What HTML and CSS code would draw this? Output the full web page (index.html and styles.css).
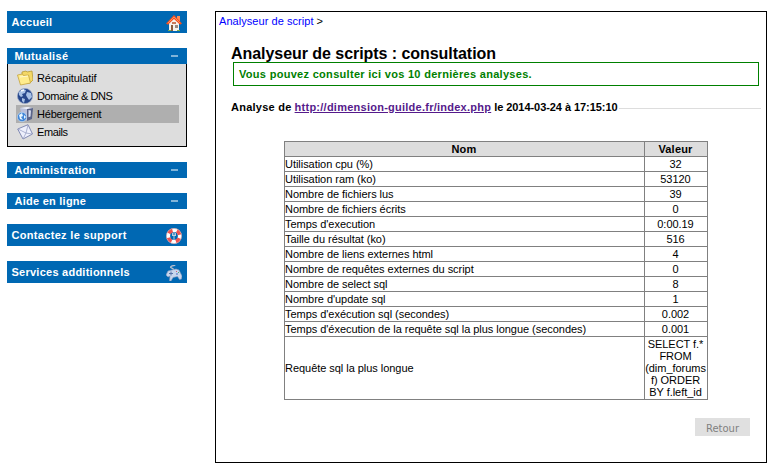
FILE: index.html
```html
<!DOCTYPE html>
<html lang="fr">
<head>
<meta charset="utf-8">
<title>Analyseur de scripts</title>
<link rel="stylesheet" href="styles.css">
</head>
<body>
<nav class="sidebar">
  <div class="bar tall"><span class="t-acc">Accueil</span>
    <svg class="icon" viewBox="0 0 16 16"><path d="M11 1h3v5h-3z" fill="#ff8a55"/><path d="M3 7l5-5 5 5v9H3z" fill="#f5f1ed"/><path d="M0 8.500 8 0l8 8.500-2 1.200L8 4 2 9.700z" fill="#f4511e"/><path d="M2 8l6-6 6 6" fill="none" stroke="#ff9a70" stroke-width=".8"/><path d="M5 10h2v6H5z" fill="#8c5a3c"/><path d="M9 10h3v3H9z" fill="#9a8a80"/><path d="M6 7h4v2H6z" fill="#c9785a"/><path d="M2 15h3v1H2zM11 15h3v1h-3z" fill="#7fae4a"/></svg>
  </div>
  <section class="group">
    <div class="bar"><span class="t-mut">Mutualisé</span><i class="dash"></i></div>
    <ul class="items">
      <li><svg class="icon" viewBox="0 0 16 16"><path d="M5 2l4-1 1 1 5-1 1 9-3 3H5z" fill="#f4d867" stroke="#b89a35" stroke-width=".8"/><path d="M.5 5l5-1 1 1.500 5-.5 2 8-10 2z" fill="#ffec8c" stroke="#c5a33c" stroke-width=".8"/><path d="M3 7l8-1" stroke="#fff9cf"/></svg><span class="t-rec">Récapitulatif</span></li>
      <li><svg class="icon" viewBox="0 0 16 16"><circle cx="8" cy="8" r="7.600" fill="#27478c" stroke="#9aa8c4" stroke-width=".7"/><path d="M2 4l4-3 3 1-1 3-3 1 1 2-2 1-2-2zM10 4l4 1 1 4-3 3-2-3-1-2zM5 10l3 1-1 4-2-2z" fill="#a8c1e6"/><path d="M4 3l3-1" stroke="#f4f8ff" stroke-width="1.400"/></svg><span class="t-dom">Domaine &amp; DNS</span></li>
      <li class="active"><svg class="icon" viewBox="0 0 16 16"><path d="M3 2l8-1v13l-5 1z" fill="#b9bfdb"/><path d="M10 1l6 1-1 11-5 2z" fill="#596389"/><path d="M11.500 4l2.500.5-.5 6-2 .8z" fill="#d7ddef"/><path d="M3 2l8-1 5 1-6 1z" fill="#f2f4fc"/><circle cx="5" cy="11" r="4.700" fill="#4286d8" stroke="#d7e9fa" stroke-width=".6"/><path d="M2 9l3-2 1 3-2 1 2 3-3-1zM7 9l2 2-2 2z" fill="#e8f6ff"/></svg><span class="t-heb">Hébergement</span></li>
      <li><svg class="icon" viewBox="0 0 16 16"><path d="M.7 5L11 .7 15.500 10 6 15z" fill="#eef0fc" stroke="#7780ad" stroke-width=".9"/><path d="M1 5l8 4 2-8M9 9l6 1M9 9l-3 6" fill="none" stroke="#9ba2c5" stroke-width=".8"/></svg><span class="t-ema">Emails</span></li>
    </ul>
  </section>
  <div class="bar"><span class="t-adm">Administration</span><i class="dash"></i></div>
  <div class="bar"><span class="t-aid">Aide en ligne</span><i class="dash"></i></div>
  <div class="bar tall"><span class="t-con">Contactez le support</span>
    <svg class="icon" viewBox="0 0 16 16"><circle cx="8" cy="8" r="5.800" fill="none" stroke="#fff" stroke-width="3.800"/><circle cx="8" cy="8" r="5.800" fill="none" stroke="#ef5350" stroke-width="3.800" stroke-dasharray="4.550 4.560" stroke-dashoffset="-2.300"/><circle cx="8" cy="8" r="7.600" fill="none" stroke="#d9a09e" stroke-width=".6"/><path d="M6.500 5v3M8 4v8M9.500 5v3M6.500 7.500h3" fill="none" stroke="#c7d5e2" stroke-width=".9"/></svg>
  </div>
  <div class="bar tall"><span class="t-ser">Services additionnels</span>
    <svg class="icon" viewBox="0 0 16 16"><path d="M8 5C8 3 3 3 5 1.500S9 1 9 0" fill="none" stroke="#b8bfce" stroke-width="1.200"/><path d="M0 10l2-4 8-2 3 1 3 6-.5 3-2 .5-2-3-4.500 1-2 3.500H3.500L4 11l-2 1z" fill="#c7d6ed" stroke="#8799bd" stroke-width=".6"/><path d="M3 8.500h4M5 6.500v4" stroke="#5672a8"/><path d="M10 6h1v1h-1z" fill="#d85f70"/><path d="M12 7h1v1h-1z" fill="#55a973"/><path d="M10 8.500h2v1h-2z" fill="#4f6dc4"/></svg>
  </div>
</nav>
<main class="panel">
  <div class="crumb"><a href="#">Analyseur de script</a> &gt;</div>
  <h1>Analyseur de scripts : consultation</h1>
  <p class="notice">Vous pouvez consulter ici vos 10 dernières analyses.</p>
  <div class="legend"><span>Analyse de</span><a href="#">http://dimension-guilde.fr/index.php</a><span class="date">le 2014-03-24 à 17:15:10</span></div>
  <table>
    <colgroup><col class="name"><col class="value"></colgroup>
    <tr><th>Nom</th><th>Valeur</th></tr>
    <tr><td>Utilisation cpu (%)</td><td>32</td></tr>
    <tr><td>Utilisation ram (ko)</td><td>53120</td></tr>
    <tr><td>Nombre de fichiers lus</td><td>39</td></tr>
    <tr><td>Nombre de fichiers écrits</td><td>0</td></tr>
    <tr><td>Temps d'execution</td><td>0:00.19</td></tr>
    <tr><td>Taille du résultat (ko)</td><td>516</td></tr>
    <tr><td>Nombre de liens externes html</td><td>4</td></tr>
    <tr><td>Nombre de requêtes externes du script</td><td>0</td></tr>
    <tr><td>Nombre de select sql</td><td>8</td></tr>
    <tr><td>Nombre d'update sql</td><td>1</td></tr>
    <tr><td>Temps d'exécution sql (secondes)</td><td>0.002</td></tr>
    <tr><td>Temps d'éxecution de la requête sql la plus longue (secondes)</td><td>0.001</td></tr>
    <tr><td>Requête sql la plus longue</td><td>SELECT f.*<br>FROM<br>(dim_forums<br>f) ORDER<br>BY f.left_id</td></tr>
  </table>
  <button class="back">Retour</button>
</main>
</body>
</html>
```
FILE: styles.css
```css
* { box-sizing: border-box; }
body {
  margin: 0;
  padding: 11px 13px 0 7px;
  display: flex;
  align-items: flex-start;
  gap: 28px;
  background: #fff;
  color: #000;
  font: 11px/12px "Liberation Sans", Arial, sans-serif;
  white-space: nowrap;
}
.sidebar { width: 180px; display: flex; flex-direction: column; gap: 15px; }
.bar {
  height: 16px;
  padding: 0 9px 0 7.500px;
  display: flex;
  align-items: center;
  justify-content: space-between;
  background: #0068b3;
  color: #fff;
  font-weight: bold;
  letter-spacing: .25px;
}
.bar.tall { height: 22px; padding: 0 5px 0 4.500px; }
.t-mut { letter-spacing: .35px; }
.t-con { letter-spacing: .32px; }
.t-dom { letter-spacing: -.4px; }
.t-rec { letter-spacing: -.08px; }
.t-heb { letter-spacing: -.2px; }
.t-ema { letter-spacing: -.4px; }
.icon { width: 16px; height: 16px; flex: none; }
.tall .icon { margin-top: 2px; }
.dash { width: 7px; height: 2px; background: #80b4d9; }
.items {
  height: 83px;
  margin: 0;
  padding: 5px 7px 0 8px;
  list-style: none;
  background: #ddd;
  border: solid #000;
  border-width: 0 1px 1px;
}
.items li { height: 18px; padding-left: 1px; display: flex; align-items: center; gap: 4px; }
.items .active { background: #afafaf; }
.panel {
  width: 552px;
  height: 452px;
  border: 1px solid #000;
  display: flex;
  flex-direction: column;
}
.crumb { margin: 3px 0 0 3px; letter-spacing: .05px; }
.crumb a { color: #00f; text-decoration: none; }
h1 {
  height: 18px;
  margin: 17px 0 0 15px;
  font-size: 16px;
  line-height: 19px;
  letter-spacing: -.05px;
}
.notice {
  height: 24px;
  margin: 0 7px 0 17px;
  padding: 0 5px;
  line-height: 22px;
  border: 1px solid #008000;
  color: #008000;
  font-weight: bold;
  letter-spacing: .3px;
}
.legend {
  height: 14px;
  margin: 14px 5px 0 15px;
  display: flex;
  align-items: center;
  gap: 3px;
  font-weight: bold;
  letter-spacing: .25px;
}
.legend a { color: #551a8b; }
.legend .date { letter-spacing: -.06px; }
.legend::after { content: ""; flex: 1; height: 1px; margin: 2px 0 0 -2px; background: #ddd; }
table {
  width: 424px;
  margin: 27px 0 0 68px;
  border-collapse: collapse;
  table-layout: fixed;
}
.name { width: 360px; }
.value { width: 63px; }
th, td { padding: 1px; border: 1px solid #808080; }
th { padding-right: 2px; background: #ddd; letter-spacing: .2px; }
td { padding-left: 0; letter-spacing: -.04px; }
td + td { text-align: center; }
.back {
  width: 55px;
  height: 18px;
  margin: 18px 16px 0 auto;
  padding: 4px 0 0;
  border: 0;
  background: #e0e0e0;
  color: #808080;
  font: 10px/12px "DejaVu Sans", Verdana, sans-serif;
}
```
